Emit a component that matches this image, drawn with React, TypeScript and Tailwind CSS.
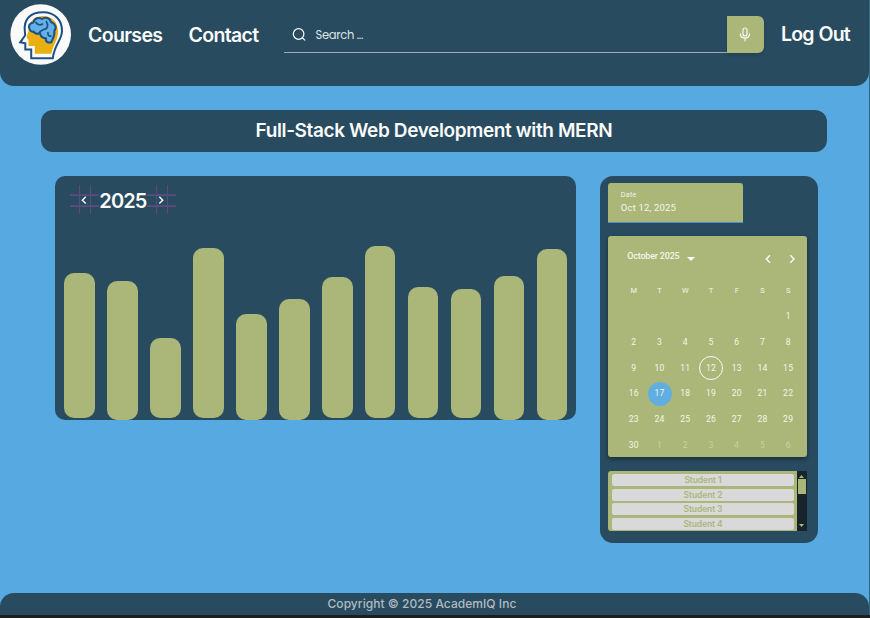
import React from "react";

const bars: { height: number; drop: number }[] = [
  { height: 145.5, drop: 1.3 },
  { height: 139, drop: 0 },
  { height: 80.7, drop: 1.3 },
  { height: 170, drop: 1.3 },
  { height: 105.4, drop: 0 },
  { height: 120.6, drop: 0 },
  { height: 141.7, drop: 1.3 },
  { height: 172.6, drop: 1.3 },
  { height: 131.4, drop: 1.3 },
  { height: 129, drop: 1.3 },
  { height: 144, drop: 0 },
  { height: 170.4, drop: 0 },
];

const weekdays = ["M", "T", "W", "T", "F", "S", "S"];
const days = [
  ...Array.from({ length: 6 }, () => 0),
  ...Array.from({ length: 30 }, (_, i) => i + 1),
  ...Array.from({ length: 6 }, (_, i) => i + 1),
];
const students = ["Student 1", "Student 2", "Student 3", "Student 4"];

function Logo() {
  return (
    <svg className="ml-[10px] mt-[4px] h-[61px] w-[61px] shrink-0" viewBox="10 4 61 61" fill="none">
      <circle cx="40.7" cy="34.5" r="30.3" fill="#fafafa" />
      <path d="M29 29C30 19 36 16 43 16C53 16 58 23 58 32C58 41 53 44 51.5 53.7H34.8V46H28.5V40L26.5 37.5Z" fill="#e9b012" />
      <path
        d="M24.8 31C23.5 18.5 31 12.2 43 12.2C55 12.2 62 20 62 31C62 40 54.5 44 52.8 58.3H31.2V49.6H25.3V43.3L20.2 42.3L25.2 35.3Z"
        stroke="#1d5086" strokeWidth="2" strokeLinejoin="miter"
      />
      <path
        d="M30 30C27.5 26 30 22.5 33.5 22.5C34.5 18 39 16.8 42 19C45 16.3 50 18 51 22C55.5 23.5 57 28 54.3 31C55.2 35.5 53 38 51.3 42.3C48 43.3 45 41.5 46 38.3C43 38.3 40.5 36.5 40 33C37 34.5 34.5 33.5 33.5 31.5C32 32 30.8 31.3 30 30Z"
        fill="#63b1e6" stroke="#1d5086" strokeWidth="2" strokeLinejoin="round"
      />
      <path
        d="M36 22.5C37.5 25 40.5 25.5 42.5 24M46.3 21.5C49 25 47.5 29.5 43.5 29.5L40 31.5M48 32.5C47.3 35 49 36.5 51 36"
        stroke="#1d5086" strokeWidth="1.7" strokeLinecap="round"
      />
    </svg>
  );
}

function Header() {
  return (
    <header className="flex h-[86.3px] shrink-0 items-start rounded-b-[14px] bg-[#284b5f] text-[#fafafa]">
      <Logo />
      <nav className="ml-[17px] mt-[21px] flex text-[19.5px] font-semibold leading-7 tracking-[-0.65px]">
        <a className="w-[100.5px]">Courses</a>
        <a className="w-[95.5px]">Contact</a>
      </nav>
      <div className="mt-[16.4px] flex h-[36.5px] w-[479.5px] shrink-0">
        <div className="flex grow items-center border-b border-[#9caab2] font-['Poppins','Open_Sans',sans-serif] text-[11.5px]">
          <svg className="ml-[7.5px] h-[15px] w-[15px]" viewBox="0 0 15 15" fill="none" stroke="#fafafa" strokeWidth="1.2" strokeLinecap="round">
            <circle cx="6.6" cy="7" r="5.3" />
            <path d="M10.4 10.8L12.8 13.2" />
          </svg>
          <span className="ml-[9px] mt-[2px] tracking-[-0.3px] text-[#dde3e6]">Search ...</span>
        </div>
        <div className="flex w-[36.5px] items-center justify-center rounded-r-[6px] bg-[#aab778] shadow-[0_2px_3px_rgba(20,45,60,0.25)]">
          <svg className="h-[15px] w-[12px]" viewBox="0 0 12 15" fill="none" stroke="#fafafa" strokeWidth="1.15" strokeLinecap="round">
            <rect x="4" y="1" width="4" height="8" rx="2" />
            <path d="M1.4 6.8C1.4 12.6 10.6 12.6 10.6 6.8M6 11.2V13.8" />
          </svg>
        </div>
      </div>
      <a className="ml-[17.5px] mt-[20px] whitespace-nowrap text-[19.5px] font-semibold leading-7 tracking-[-0.85px] [word-spacing:1px]">Log Out</a>
    </header>
  );
}

function YearArrow({ next = false }: { next?: boolean }) {
  return (
    <svg className="h-[29px] w-[29px] shrink-0" viewBox="0 0 29 29" fill="none">
      <g stroke="#5e4c80">
        <path d="M0 10.2H29M0 21.2H29" strokeWidth="1.8" />
        <path d="M9.6 0V29M20.6 0V29" strokeWidth="1" />
      </g>
      <path d={next ? "M12.3 11.8L15.8 15.2L12.3 18.6" : "M15.8 11.8L12.3 15.2L15.8 18.6"} stroke="#fafafa" strokeWidth="1.4" />
    </svg>
  );
}

function Chart() {
  return (
    <section className="flex h-[243.8px] w-[520.5px] flex-col overflow-hidden rounded-[10px] bg-[#284b5f]">
      <div className="ml-[14.6px] mt-[9px] flex h-[29px] items-center">
        <YearArrow />
        <span className="mt-[3px] w-[48.5px] text-center text-[20px] font-semibold leading-7 tracking-[-0.85px] text-[#fafafa]">2025</span>
        <YearArrow next />
      </div>
      <div className="flex grow items-end gap-[12.25px] pl-[9.1px]">
        {bars.map((bar, i) => (
          <div
            key={i}
            className="w-[30.7px] shrink-0 rounded-[10px] bg-[#aab778]"
            style={{ height: bar.height, marginBottom: bar.drop }}
          />
        ))}
      </div>
    </section>
  );
}

function Calendar() {
  return (
    <div className="mt-[13.5px] flex h-[220.6px] w-[199px] flex-col rounded-[3px] bg-[#aab778] font-[Roboto,sans-serif] text-[#f3f5e9] shadow-[0_2px_4px_rgba(0,0,0,0.4)]">
      <div className="flex h-[42px] shrink-0 items-center pl-[19.3px]">
        <span className="mt-[-2px] w-[52px] whitespace-nowrap text-[9px] font-medium leading-3 tracking-[-0.2px]">October 2025</span>
        <svg className="ml-[8px] mt-[4px] h-[4px] w-[8px]" viewBox="0 0 8 4" fill="#fafafa"><path d="M0 0H8L4 4Z" /></svg>
        <svg className="ml-auto mr-[11px] mt-[3px] h-[10px] w-[32px]" viewBox="0 0 32 10" fill="none" stroke="#fafafa" strokeWidth="1.4">
          <path d="M6 1.3L2.3 5L6 8.7M26.3 1.3L30 5L26.3 8.7" />
        </svg>
      </div>
      <div className="grid grid-cols-[repeat(7,25.72px)] auto-rows-[25.72px] pl-[13px]">
        {weekdays.map((day, i) => (
          <div key={i} className="flex items-center justify-center text-[7.5px]">{day}</div>
        ))}
        {days.map((day, i) => (
          <div key={i} className="flex items-center justify-center">
            <span
              className={
                "flex h-[24px] w-[24px] shrink-0 items-center justify-center rounded-full text-[8.6px] leading-[13px] tracking-[0.2px] " +
                (i === 17 ? "border border-[#fafafa]" : i === 22 ? "bg-[#61afe1]" : i > 35 ? "text-[#c8d0a5]" : "")
              }
            >
              {day || ""}
            </span>
          </div>
        ))}
      </div>
    </div>
  );
}

function StudentList() {
  return (
    <div className="mt-[14px] flex h-[60.5px] w-[199px] overflow-hidden rounded-l-[3px]">
      <div className="flex grow flex-col gap-[2.3px] bg-[#aab778] pl-[4px] pr-[3px] pt-[3.4px]">
        {students.map((name) => (
          <div key={name} className="flex h-[12.2px] shrink-0 items-center justify-center rounded-[2px] bg-[#d9d9d9] text-[8.5px] font-semibold leading-3 tracking-[-0.1px] text-[#aab778]">
            {name}
          </div>
        ))}
      </div>
      <div className="flex w-[10px] flex-col items-center bg-[#17242b]">
        <svg className="mt-[4px] h-[3px] w-[5px]" viewBox="0 0 5 3" fill="#aab778"><path d="M0 3H5L2.5 0Z" /></svg>
        <div className="mt-[1.5px] h-[15px] w-[8px] bg-[#aab778]" />
        <svg className="mb-[4px] mt-auto h-[3px] w-[5px]" viewBox="0 0 5 3" fill="#aab778"><path d="M0 0H5L2.5 3Z" /></svg>
      </div>
    </div>
  );
}

export default function App() {
  return (
    <div className="flex h-[618px] w-[870px] flex-col overflow-hidden bg-[#1e1e1e] font-[Inter,sans-serif]">
      <div className="flex h-[615px] w-full shrink-0 flex-col border-r border-[#32687f] bg-[#56aae1]">
        <Header />
        <main className="grow">
          <h1 className="ml-[40.6px] mt-[24.2px] flex h-[41.3px] w-[786.7px] items-center justify-center whitespace-nowrap rounded-[12px] bg-[#284b5f] pt-[1px] text-[19px] font-semibold tracking-[-0.38px] text-[#fafafa]">
            Full-Stack Web Development with MERN
          </h1>
          <div className="ml-[55.1px] mt-[24.2px] flex items-start gap-[24.2px]">
            <Chart />
            <aside className="h-[366.6px] w-[218.4px] rounded-[13px] bg-[#284b5f] pl-[8.2px] pt-[7px]">
              <div className="flex h-[39.6px] w-[134.8px] flex-col rounded-t-[3px] border-b border-[#4d92c2] bg-[#aab778] pl-[12.9px] pt-[6.8px] font-[Roboto,sans-serif] text-[#f3f5e9]">
                <span className="text-[7.2px] leading-[9px] tracking-[0.25px]">Date</span>
                <span className="mt-[1.5px] text-[9.5px] leading-[15px] tracking-[0.15px]">Oct 12, 2025</span>
              </div>
              <Calendar />
              <StudentList />
            </aside>
          </div>
        </main>
        <footer className="flex h-[22.4px] shrink-0 items-center rounded-t-[14px] bg-[#284b5f] pl-[327.5px] text-[12px] font-medium tracking-[0.04px] text-[#b0bbc1]">
          Copyright © 2025 AcademIQ Inc
        </footer>
      </div>
    </div>
  );
}
